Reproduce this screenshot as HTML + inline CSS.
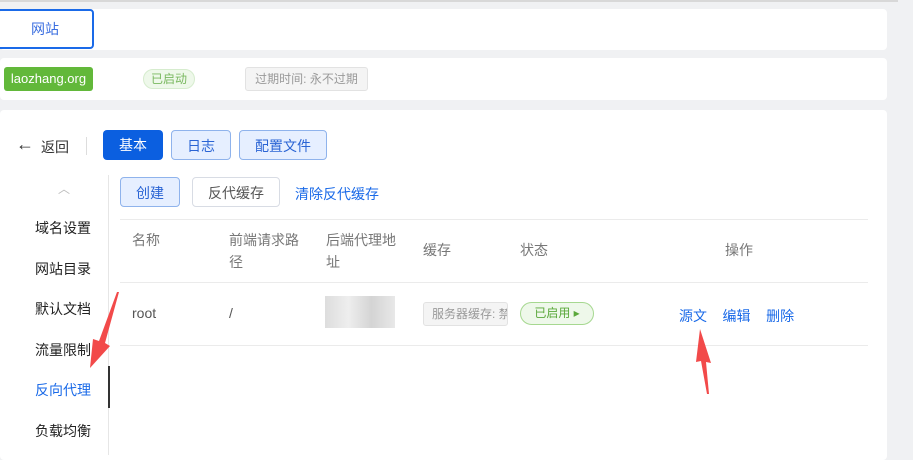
<!DOCTYPE html><html><head><meta charset="utf-8"><style>
body{margin:0;width:913px;height:455px;background:#f0f1f3;font-family:"Liberation Sans","Noto Sans CJK SC",sans-serif;position:relative;overflow:hidden;font-size:14px;color:#333}
.a{position:absolute}
.card{position:absolute;left:0;width:887px;background:#fff;border-radius:4px}
.btn{position:absolute;height:30px;line-height:30px;text-align:center;border-radius:4px;box-sizing:border-box}
</style></head><body>
<div class="a" style="left:0;top:0;width:913px;height:2px;background:#d8d8d8"></div>
<div class="card" style="top:9px;height:41px"></div>
<div class="a" style="left:-4px;top:9px;width:98px;height:40px;border:2px solid #1a6ae8;border-radius:4px;box-sizing:border-box;color:#3a6ee0;text-align:center;line-height:36px">网站</div>
<div class="card" style="top:58px;height:42px"></div>
<div class="a" style="left:4px;top:67px;width:89px;height:24px;background:#62b83a;border-radius:3px;color:#fff;font-size:13px;text-align:center;line-height:24px">laozhang.org</div>
<div class="a" style="left:143px;top:69px;width:52px;height:20px;background:#eef8ea;border:1px solid #d6ecce;border-radius:10px;color:#7ab860;font-size:12px;text-align:center;line-height:18px;box-sizing:border-box">已启动</div>
<div class="a" style="left:245px;top:67px;width:123px;height:24px;background:#f4f4f4;border:1px solid #e2e2e2;border-radius:3px;color:#999;font-size:12px;text-align:center;line-height:22px;box-sizing:border-box">过期时间: 永不过期</div>
<div class="card" style="top:110px;height:350px"></div>
<div class="a" style="left:16px;top:134px;font-size:18px;color:#333">←</div>
<div class="a" style="left:41px;top:137px;font-size:14px;color:#333">返回</div>
<div class="a" style="left:86px;top:137px;width:1px;height:18px;background:#ddd"></div>
<div class="btn" style="left:103px;top:130px;width:60px;background:#0b5fe0;color:#fff">基本</div>
<div class="btn" style="left:171px;top:130px;width:60px;background:#e6efff;border:1px solid #8fb3ec;color:#2a64d4">日志</div>
<div class="btn" style="left:239px;top:130px;width:88px;background:#e6efff;border:1px solid #8fb3ec;color:#2a64d4">配置文件</div>
<div class="a" style="left:58px;top:180px;color:#bbb;font-size:12px">︿</div>
<div class="a" style="left:108px;top:175px;width:1px;height:280px;background:#e6e6e6"></div>
<div class="a" style="left:108px;top:366px;width:2px;height:42px;background:#333"></div>
<div class="a" style="left:35px;top:208px;line-height:40.5px;font-size:14px;color:#222">域名设置<br>网站目录<br>默认文档<br>流量限制<br><span style="color:#1a6ae8">反向代理</span><br>负载均衡</div>
<div class="btn" style="left:120px;top:177px;width:60px;background:#e6efff;border:1px solid #8fb3ec;color:#2a64d4">创建</div>
<div class="btn" style="left:192px;top:177px;width:88px;border:1px solid #d8dce4;color:#555">反代缓存</div>
<div class="a" style="left:295px;top:184px;color:#1a6ae8">清除反代缓存</div>
<div class="a" style="left:120px;top:219px;width:748px;height:1px;background:#ebebeb"></div>
<div class="a" style="left:120px;top:282px;width:748px;height:1px;background:#ebebeb"></div>
<div class="a" style="left:120px;top:345px;width:748px;height:1px;background:#ebebeb"></div>
<div class="a" style="top:229px;left:132px;color:#777;line-height:22px">名称</div>
<div class="a" style="top:229px;left:229px;color:#777;line-height:22px;width:80px">前端请求路<br>径</div>
<div class="a" style="top:229px;left:326px;color:#777;line-height:22px;width:80px">后端代理地<br>址</div>
<div class="a" style="top:240px;left:423px;color:#777">缓存</div>
<div class="a" style="top:240px;left:520px;color:#777">状态</div>
<div class="a" style="top:240px;left:725px;color:#777">操作</div>
<div class="a" style="top:305px;left:132px;color:#555">root</div>
<div class="a" style="top:305px;left:229px;color:#555">/</div>
<div class="a" style="top:296px;left:325px;width:70px;height:32px;background:linear-gradient(90deg,#ddd,#eee,#d4d4d4,#e8e8e8)"></div>
<div class="a" style="top:302px;left:423px;width:85px;height:24px;background:#f4f4f4;border:1px solid #e2e2e2;border-radius:3px;color:#999;font-size:12px;line-height:22px;box-sizing:border-box;padding-left:8px;overflow:hidden;white-space:nowrap">服务器缓存: 禁</div>
<div class="a" style="top:302px;left:520px;width:74px;height:23px;background:#eef8ea;border:1px solid #a6d890;border-radius:12px;color:#5aa83a;font-size:12px;line-height:21px;box-sizing:border-box;text-align:center">已启用 ▸</div>
<div class="a" style="top:306px;left:679px;color:#1a6ae8">源文&nbsp;&nbsp;&nbsp;&nbsp;编辑&nbsp;&nbsp;&nbsp;&nbsp;删除</div>
<svg class="a" style="left:0;top:0" width="913" height="455"><polygon points="119,292 105,343 110,346 90,368 93,339 99,341 117,292" fill="#f24a4a"/><polygon points="700,329 711,363 706,362 709,394 707,394 701,361 696,362" fill="#f24a4a"/></svg>
<div class="a" style="left:898px;top:0;width:15px;height:455px;background:#f0f1f3"></div>
</body></html>
